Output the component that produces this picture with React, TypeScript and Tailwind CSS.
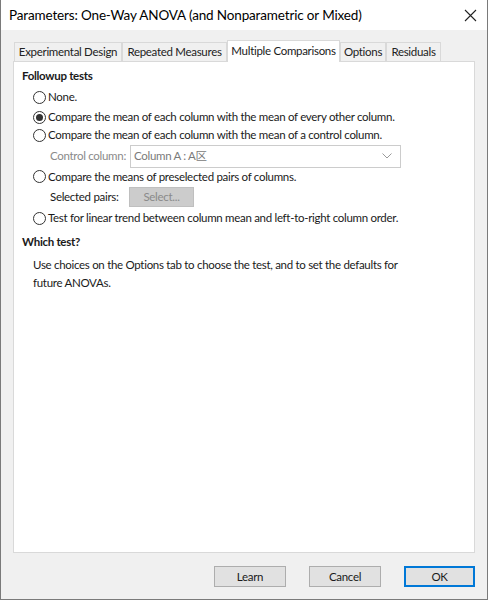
import React from 'react'

const font = { fontFamily: 'Lato, "Noto Sans", "Noto Sans CJK SC", sans-serif' }

function Radio({ checked }: { checked?: boolean }) {
  return (
    <span className="flex h-[13px] w-[13px] shrink-0 items-center justify-center rounded-full border border-[#333333] bg-white">
      {checked && <span className="h-[7px] w-[7px] rounded-full bg-[#333333]" />}
    </span>
  )
}

function Option({ label, checked, h }: { label: string; checked?: boolean; h: string }) {
  return (
    <div className={`flex items-center gap-[2px] whitespace-nowrap ${h}`}>
      <Radio checked={checked} />
      <span>{label}</span>
    </div>
  )
}

const tabs = [
  { label: 'Experimental Design', w: 'w-[108px]' },
  { label: 'Repeated Measures', w: 'w-[105px]' },
  { label: 'Multiple Comparisons', w: 'w-[113px]', active: true },
  { label: 'Options', w: 'w-[46px]' },
  { label: 'Residuals', w: 'w-[55px]' },
]

export default function App() {
  return (
    <div
      className="flex h-[600px] w-[488px] flex-col overflow-hidden border-x border-b border-[#7a7a7a] bg-[#f0f0f0] text-[11.5px] tracking-[-0.3px] text-[#1a1a1a]"
      style={font}
    >
      {/* Title bar */}
      <div className="flex h-[30px] shrink-0 items-center justify-between bg-white pl-[8px] pr-[10px]">
        <span className="whitespace-nowrap text-[13.5px] tracking-[-0.15px] text-black">
          Parameters: One-Way ANOVA (and Nonparametric or Mixed)
        </span>
        <svg width="13" height="13" viewBox="0 0 13 13">
          <path d="M1 1 L12 12 M12 1 L1 12" stroke="#222" strokeWidth="1.1" />
        </svg>
      </div>

      <div className="flex flex-1 flex-col px-[12px] pt-[10px]">
        {/* Tabs */}
        <div className="flex h-[21px] items-end whitespace-nowrap pl-[1px]">
          {tabs.map((t) =>
            t.active ? (
              <div
                key={t.label}
                className={`relative z-10 flex h-[22px] ${t.w} -mb-px items-center justify-center border border-b-0 border-[#d9d9d9] bg-white pb-[2px]`}
              >
                {t.label}
              </div>
            ) : (
              <div
                key={t.label}
                className={`flex h-[19px] ${t.w} items-center justify-center border border-b-0 border-[#d9d9d9] bg-[#f0f0f0] text-[#222]`}
              >
                {t.label}
              </div>
            ),
          )}
        </div>

        {/* Panel */}
        <div className="h-[492px] w-[462px] border border-[#d9d9d9] bg-white pl-[8px] pt-[5px]">
          <div className="flex h-[17px] items-center font-bold">Followup tests</div>
          <div className="pl-[11px] pt-[3px]">
            <Option label="None." h="h-[20px]" />
            <Option label="Compare the mean of each column with the mean of every other column." checked h="h-[20px]" />
            <Option label="Compare the mean of each column with the mean of a control column." h="h-[16px]" />
            <div className="flex h-[26px] items-center whitespace-nowrap pl-[17px]">
              <span className="w-[80px] text-[#8a8a8a]">Control column:</span>
              <div className="flex h-[23px] w-[271px] items-center justify-between border border-[#cccccc] pl-[3px] pr-[8px] text-[#7a7a7a]">
                <span>Column A : A区</span>
                <svg width="10" height="6" viewBox="0 0 10 6">
                  <path d="M0.5 0.5 L5 5 L9.5 0.5" fill="none" stroke="#9a9a9a" strokeWidth="1" />
                </svg>
              </div>
            </div>
            <Option label="Compare the means of preselected pairs of columns." h="h-[15px]" />
            <div className="flex h-[26px] items-center whitespace-nowrap pl-[17px]">
              <span className="w-[79px]">Selected pairs:</span>
              <div className="flex h-[20px] w-[65px] items-center justify-center border border-[#bfbfbf] bg-[#cccccc] text-[#8a8a8a]">
                Select...
              </div>
            </div>
            <Option label="Test for linear trend between column mean and left-to-right column order." h="h-[16px]" />
          </div>
          <div className="mt-[7px] flex h-[17px] items-center font-bold">Which test?</div>
          <p className="mt-[6px] w-[392px] pl-[11px] leading-[18px]">
            Use choices on the Options tab to choose the test, and to set the defaults for future ANOVAs.
          </p>
        </div>

        {/* Buttons */}
        <div className="flex justify-end gap-[23px] pt-[13px]">
          <button className="h-[21px] w-[72px] border border-[#adadad] bg-[#e1e1e1]">Learn</button>
          <button className="h-[21px] w-[72px] border border-[#adadad] bg-[#e1e1e1]">Cancel</button>
          <button className="h-[21px] w-[71px] border-2 border-[#0078d7] bg-[#e1e1e1]">OK</button>
        </div>
      </div>
    </div>
  )
}
